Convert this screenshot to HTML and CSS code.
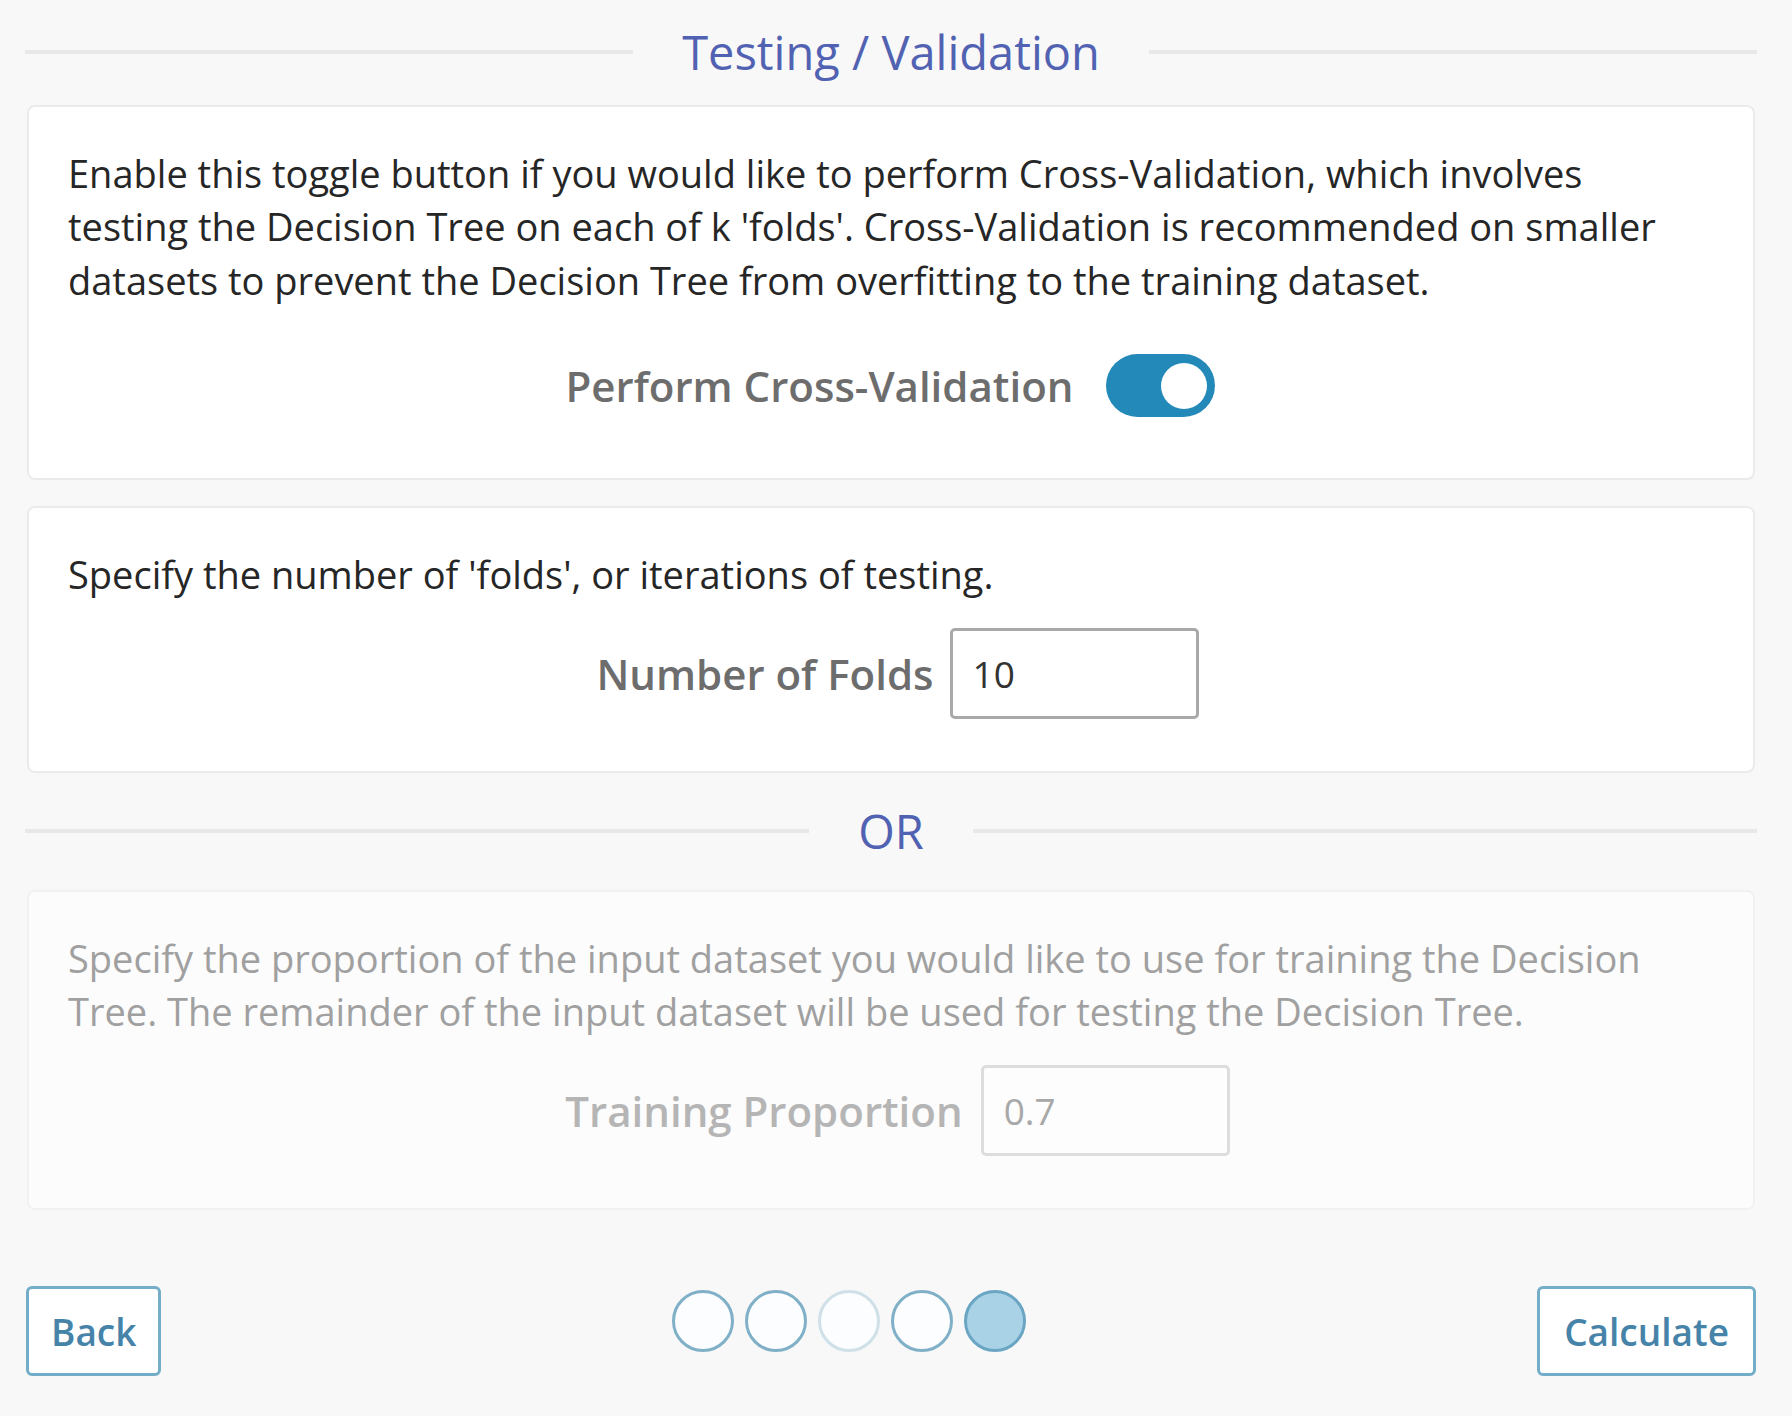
FILE: index.html
```html
<!DOCTYPE html>
<html lang="en">
<head>
<meta charset="utf-8">
<title>Testing / Validation</title>
<link rel="stylesheet" href="styles.css">
</head>
<body>
<div class="page">
  <div class="divider divider-top">
    <span class="divider-line"></span>
    <span class="divider-text">Testing / Validation</span>
    <span class="divider-line"></span>
  </div>

  <section class="card">
    <p class="card-text">Enable this toggle button if you would like to perform Cross-Validation, which involves testing the Decision Tree on each of k 'folds'. Cross-Validation is recommended on smaller datasets to prevent the Decision Tree from overfitting to the training dataset.</p>
    <div class="toggle-row">
      <span class="field-label">Perform Cross-Validation</span>
      <span class="toggle"><span class="toggle-knob"></span></span>
    </div>
  </section>

  <section class="card card-folds">
    <p class="card-text">Specify the number of 'folds', or iterations of testing.</p>
    <div class="field-row">
      <span class="field-label">Number of Folds</span>
      <span class="input">10</span>
    </div>
  </section>

  <div class="divider divider-or">
    <span class="divider-line"></span>
    <span class="divider-text">OR</span>
    <span class="divider-line"></span>
  </div>

  <section class="card card-disabled">
    <p class="card-text">Specify the proportion of the input dataset you would like to use for training the Decision Tree. The remainder of the input dataset will be used for testing the Decision Tree.</p>
    <div class="field-row">
      <span class="field-label">Training Proportion</span>
      <span class="input">0.7</span>
    </div>
  </section>

  <div class="footer">
    <button class="btn">Back</button>
    <div class="steps">
      <span class="step"></span>
      <span class="step"></span>
      <span class="step step-faint"></span>
      <span class="step"></span>
      <span class="step step-active"></span>
    </div>
    <button class="btn btn-wide">Calculate</button>
  </div>
</div>
</body>
</html>
```

FILE: styles.css
```css
* { box-sizing: border-box; }

html, body {
  margin: 0;
  padding: 0;
  background: #f8f8f8;
}

body {
  font-family: "Open Sans", "Noto Sans", sans-serif;
  color: #2b2b2b;
}

.page {
  width: 1732px;
  margin-left: 25px;
  padding-top: 20px;
}

.divider {
  display: flex;
  align-items: center;
  height: 64px;
}

.divider-line {
  flex: 1;
  height: 4px;
  background: #e8e8e8;
}

.divider-text {
  font-size: 47px;
  line-height: 64px;
  color: #5262b2;
  padding: 0 49px;
}

.divider-top { margin-bottom: 21px; }

.divider-or {
  margin: 26px 0 27px;
}

.card {
  margin: 0 2px;
  background: #ffffff;
  border: 2px solid #ebebeb;
  border-radius: 8px;
  padding: 40px 40px 40px 39px;
}

.card + .card { margin-top: 26px; }

.card-text {
  margin: 0;
  max-width: 1610px;
  font-size: 38px;
  line-height: 53.4px;
  color: #262626;
}

.toggle-row {
  display: flex;
  justify-content: center;
  align-items: center;
  gap: 33px;
  margin: 47px 0 21px;
}

.field-label {
  font-size: 42px;
  font-weight: 600;
  color: #6d6d6d;
}

.toggle {
  width: 109px;
  height: 63px;
  border-radius: 32px;
  background: #2389b8;
  display: flex;
  align-items: center;
  justify-content: flex-end;
  padding-right: 8px;
}

.toggle-knob {
  width: 46px;
  height: 46px;
  border-radius: 50%;
  background: #ffffff;
}

.field-row {
  display: flex;
  justify-content: center;
  align-items: center;
  gap: 16px;
  padding-left: 14px;
  margin: 26px 0 12px;
}

.input {
  width: 249px;
  height: 91px;
  border: 3px solid #a9a9a9;
  border-radius: 5px;
  background: #ffffff;
  padding-left: 20px;
  font-size: 37px;
  line-height: 85px;
  color: #333333;
}

.card-disabled {
  background: #fcfcfc;
  border-color: #f1f1f1;
}

.card-disabled .card-text { color: #a0a0a0; }
.card-disabled .field-label { color: #b5b5b5; }
.card-disabled .input {
  border-color: #dddddd;
  color: #a8a8a8;
  background: #fdfdfd;
}
.card-disabled .field-row { margin-top: 27px; gap: 18px; }

.footer {
  display: flex;
  justify-content: space-between;
  align-items: flex-start;
  margin: 76px 1px 0;
}

.btn {
  height: 90px;
  padding: 0 22px;
  border: 3px solid #73adc8;
  border-radius: 6px;
  background: #ffffff;
  font-family: "Open Sans", "Noto Sans", sans-serif;
  font-size: 37px;
  font-weight: 600;
  color: #4683a8;
}

.btn-wide { padding: 0 24px; }

.steps {
  display: flex;
  gap: 11px;
  margin-top: 4px;
}

.step {
  width: 62px;
  height: 62px;
  border-radius: 50%;
  border: 3px solid #80b0c7;
  background: #fbfdfe;
}

.step-faint { border-color: #cfe0e8; }

.step-active {
  background: #a9d2e6;
  border-color: #6aa6c3;
}
```
